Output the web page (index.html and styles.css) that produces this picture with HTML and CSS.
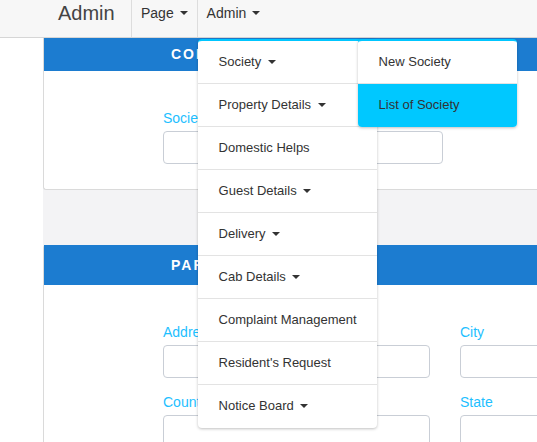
FILE: index.html
```html
<!DOCTYPE html>
<html>
<head>
<meta charset="utf-8">
<link rel="stylesheet" href="styles.css">
</head>
<body>
<nav class="navbar">
  <div class="brand">Admin</div>
  <div class="nav-item">Page <span class="caret"></span></div>
  <div class="nav-item open">Admin <span class="caret"></span>
    <ul class="dropdown">
      <li>Society <span class="caret"></span></li>
      <li>Property Details <span class="caret"></span></li>
      <li>Domestic Helps</li>
      <li>Guest Details <span class="caret"></span></li>
      <li>Delivery <span class="caret"></span></li>
      <li>Cab Details <span class="caret"></span></li>
      <li>Complaint Management</li>
      <li>Resident's Request</li>
      <li>Notice Board <span class="caret"></span></li>
    </ul>
    <ul class="submenu">
      <li>New Society</li>
      <li class="active">List of Society</li>
    </ul>
  </div>
</nav>
<div class="main">
  <div class="sidebar"></div>
  <div class="content">
    <section class="card first">
      <div class="card-head">CONTACT</div>
      <div class="card-body body1">
        <div class="field">
          <label>Society Name</label>
          <div class="input w280"></div>
        </div>
      </div>
    </section>
    <section class="card second">
      <div class="card-head tall">PARTICULARS</div>
      <div class="card-body body2">
        <div class="row">
          <div class="field">
            <label>Address</label>
            <div class="input w267"></div>
          </div>
          <div class="field">
            <label>City</label>
            <div class="input w267"></div>
          </div>
        </div>
        <div class="row">
          <div class="field">
            <label>Country</label>
            <div class="input w267"></div>
          </div>
          <div class="field">
            <label>State</label>
            <div class="input w267"></div>
          </div>
        </div>
      </div>
    </section>
  </div>
</div>
</body>
</html>
```

FILE: styles.css
```css
* { box-sizing: border-box; }
html, body { margin: 0; padding: 0; background: #fff; overflow: hidden; }
body { font-family: "Liberation Sans", Arial, sans-serif; color: #333; width: 537px; height: 442px; }

.navbar {
  height: 38px;
  background: #f7f7f7;
  border-bottom: 1px solid #d6d6d6;
  display: flex;
  position: relative;
  z-index: 5;
}
.brand {
  width: 131px;
  padding-left: 58px;
  font-size: 20px;
  line-height: 26px;
  color: #444;
}
.nav-item {
  position: relative;
  border-left: 1px solid #ddd;
  padding: 0 9px;
  font-size: 14px;
  line-height: 26px;
  color: #333;
  white-space: nowrap;
}
.caret {
  display: inline-block;
  width: 0; height: 0;
  border-left: 4px solid transparent;
  border-right: 4px solid transparent;
  border-top: 4px solid #333;
  vertical-align: middle;
  margin-left: 2px;
  margin-top: -2px;
}

.dropdown, .submenu {
  list-style: none;
  margin: 0; padding: 0;
  position: absolute;
  top: 39px;
  background: #fff;
  border-top: 2px solid #00c6ff;
  border-radius: 4px;
  box-shadow: 0 1px 3px rgba(0,0,0,0.25);
  font-size: 13px;
}
.dropdown { left: 0; width: 179px; }
.submenu { left: 160px; width: 159px; }
.dropdown li, .submenu li {
  height: 43px;
  line-height: 42px;
  padding-left: 21px;
  border-bottom: 1px solid #e3e3e3;
  white-space: nowrap;
}
.dropdown li:last-child, .submenu li:last-child { border-bottom: none; }
.dropdown li .caret { margin-left: 3px; }
.submenu li.active { background: #00c8ff; border-radius: 0 0 4px 4px; }

.main { display: flex; height: 404px; }
.sidebar { width: 43px; flex: none; background: #fff; }
.content {
  flex: none;
  width: 600px;
  background: #f3f3f5;
}
.card {
  background: #fff;
  border: 1px solid #dadada;
  border-right: none;
  border-radius: 3px;
}
.card.first { border-top: none; border-radius: 0 0 3px 3px; }
.card.second { margin-top: 55px; border-top: none; }
.card-head {
  background: #1c7cd0;
  color: #fff;
  font-weight: bold;
  font-size: 14px;
  letter-spacing: 2px;
  height: 33px;
  line-height: 33px;
  padding-left: 127px;
}
.card-head.tall { height: 40px; line-height: 40px; }
.body1 { height: 118px; padding: 39px 0 0 119px; }
.body2 { padding: 39px 0 0 119px; height: 160px; }
.row { display: flex; gap: 30px; margin-bottom: 16px; }
.field label {
  display: block;
  color: #1ec0ff;
  font-size: 14px;
  line-height: 16px;
  margin-bottom: 5px;
}
.input {
  height: 33px;
  border: 1px solid #c9ced6;
  border-radius: 4px;
  background: #fff;
}
.w280 { width: 280px; }
.w267 { width: 267px; }
```
